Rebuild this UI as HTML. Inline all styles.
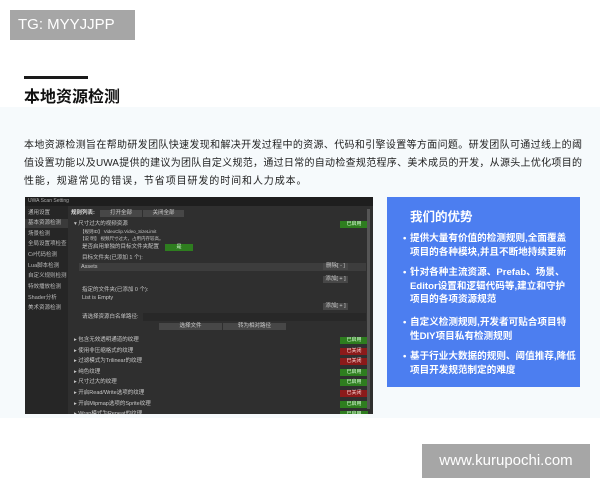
<!DOCTYPE html>
<html><head><meta charset="utf-8"><style>
*{margin:0;padding:0;box-sizing:border-box}
body{width:600px;height:480px;background:#fff;position:relative;overflow:hidden;font-family:"Liberation Sans","Noto Sans CJK SC",sans-serif}
.a{position:absolute;white-space:nowrap}
.tg{left:10px;top:10px;width:125px;height:30px;background:#a6a6a6;color:#fff;font-size:15px;line-height:30px;padding-left:8px}
.wm{left:422px;top:444px;width:168px;height:34px;background:#a6a6a6;color:#fff;font-size:15px;line-height:34px;text-align:center}
.band{left:0;top:107px;width:600px;height:311px;background:#f6fafc}
.pl{left:24px;width:558px;font-size:10px;line-height:18px;color:#222;white-space:nowrap;overflow:hidden;text-align:justify;text-align-last:justify}
.panel{left:25px;top:197px;width:348px;height:217px;background:#2f2f2f;overflow:hidden}
.tb{left:0;top:0;width:348px;height:9px;background:#1e1e1e;font-size:5px;color:#aaa;line-height:9px;padding-left:3px}
.sb{left:0;top:9px;width:43px;height:208px;background:#262626}
.s{font-size:5.5px;color:#bbb;left:3px;line-height:7px}
.t{font-size:5.5px;color:#c8c8c8;line-height:7px}
.g{background:#2e7d1f;color:#dfd;font-size:5px;text-align:center;width:28px;height:7px;line-height:7px}
.r{background:#8b1a1a;color:#fdd;font-size:5px;text-align:center;width:28px;height:7px;line-height:7px}
.btn{background:#474747;color:#ccc;font-size:5.5px;text-align:center;height:7px;line-height:7px}
.blue{left:387px;top:197px;width:193px;height:190px;background:#4c7ef0;color:#fff}
.bl{font-size:9.6px;font-weight:bold;line-height:13.5px;left:23px;white-space:nowrap}
.dot{position:absolute;left:-7px}
</style></head><body>
<div class="a tg">TG: MYYJJPP</div>
<div class="a" style="left:24px;top:76px;width:64px;height:3px;background:#1a1a1a"></div>
<div class="a" style="left:24px;top:83px;font-size:16px;font-weight:bold;color:#111">本地资源检测</div>
<div class="a band"></div>
<div class="a pl" style="top:137px">本地资源检测旨在帮助研发团队快速发现和解决开发过程中的资源、代码和引擎设置等方面问题。研发团队可通过线上的阈</div>
<div class="a pl" style="top:155px">值设置功能以及UWA提供的建议为团队自定义规范，通过日常的自动检查规范程序、美术成员的开发，从源头上优化项目的</div>
<div class="a" style="left:24px;top:173px;font-size:10px;line-height:18px;color:#222;letter-spacing:0.9px">性能，规避常见的错误，节省项目研发的时间和人力成本。</div>
<div class="a panel">
<div class="a tb">UWA Scan Setting</div>
<div class="a sb"></div>
<div class="a s" style="top:13px">通用设置</div>
<div class="a" style="left:0;top:22px;width:43px;height:9px;background:#3a3a3a"></div>
<div class="a s" style="top:23px">基本资源检测</div>
<div class="a s" style="top:34px">场景检测</div>
<div class="a s" style="top:44px">全局设置项检查</div>
<div class="a s" style="top:55px">C#代码检测</div>
<div class="a s" style="top:66px">Lua脚本检测</div>
<div class="a s" style="top:76px">自定义规则检测</div>
<div class="a s" style="top:87px">特效播放检测</div>
<div class="a s" style="top:98px">Shader分析</div>
<div class="a s" style="top:108px">美术资源检测</div>
<div class="a t" style="left:46px;top:13px;font-weight:bold;color:#ddd">规则列表:</div>
<div class="a btn" style="left:75px;top:13px;width:42px">打开全部</div>
<div class="a btn" style="left:118px;top:13px;width:41px">关闭全部</div>
<div class="a t" style="left:49px;top:24px">▾ 尺寸过大的视频资源</div>
<div class="a g" style="left:315px;top:24px">已启用</div>
<div class="a t" style="left:55px;top:31px;font-size:4.5px">【规则ID】 VideoClip.Video_SizeLimit</div>
<div class="a t" style="left:55px;top:38px;font-size:4.5px">【说 明】 视频尺寸过大，占用内存较高。</div>
<div class="a t" style="left:57px;top:47px">是否启用单独的目标文件夹配置</div>
<div class="a g" style="left:140px;top:47px">是</div>
<div class="a t" style="left:57px;top:58px">目标文件夹(已添加 1 个):</div>
<div class="a" style="left:54px;top:66px;width:287px;height:8px;background:#3d3d3d"></div>
<div class="a t" style="left:56px;top:67px">Assets</div>
<div class="a btn" style="left:298px;top:66px;width:25px">删除[ - ]</div>
<div class="a btn" style="left:298px;top:79px;width:25px">添加[ + ]</div>
<div class="a t" style="left:57px;top:90px">指定的文件夹(已添加 0 个):</div>
<div class="a t" style="left:57px;top:98px">List is Empty</div>
<div class="a btn" style="left:298px;top:106px;width:25px">添加[ + ]</div>
<div class="a t" style="left:57px;top:117px">请选择资源白名单路径:</div>
<div class="a" style="left:118px;top:116px;width:223px;height:8px;background:#282828"></div>
<div class="a btn" style="left:134px;top:126px;width:63px">选择文件</div>
<div class="a btn" style="left:198px;top:126px;width:63px">转为相对路径</div>
<div class="a t" style="left:49px;top:140px">▸ 包含无效透明通道的纹理</div><div class="a g" style="left:315px;top:140px">已启用</div>
<div class="a t" style="left:49px;top:151px">▸ 使用非压缩格式的纹理</div><div class="a r" style="left:315px;top:151px">已关闭</div>
<div class="a t" style="left:49px;top:161px">▸ 过滤模式为Trilinear的纹理</div><div class="a r" style="left:315px;top:161px">已关闭</div>
<div class="a t" style="left:49px;top:172px">▸ 纯色纹理</div><div class="a g" style="left:315px;top:172px">已启用</div>
<div class="a t" style="left:49px;top:182px">▸ 尺寸过大的纹理</div><div class="a g" style="left:315px;top:182px">已启用</div>
<div class="a t" style="left:49px;top:193px">▸ 开启Read/Write选项的纹理</div><div class="a r" style="left:315px;top:193px">已关闭</div>
<div class="a t" style="left:49px;top:204px">▸ 开启Mipmap选项的Sprite纹理</div><div class="a g" style="left:315px;top:204px">已启用</div>
<div class="a t" style="left:49px;top:214px">▸ Wrap模式为Repeat的纹理</div><div class="a g" style="left:315px;top:214px">已启用</div>
<div class="a" style="left:342px;top:12px;width:3px;height:200px;background:#555"></div>
</div>
<div class="a blue">
<div class="a" style="left:23px;top:9px;font-size:12.5px;font-weight:bold">我们的优势</div>
<div class="a bl" style="top:35px"><span class="dot">•</span>提供大量有价值的检测规则,全面覆盖<br>项目的各种模块,并且不断地持续更新</div>
<div class="a bl" style="top:69px"><span class="dot">•</span>针对各种主流资源、Prefab、场景、<br>Editor设置和逻辑代码等,建立和守护<br>项目的各项资源规范</div>
<div class="a bl" style="top:119px"><span class="dot">•</span>自定义检测规则,开发者可贴合项目特<br>性DIY项目私有检测规则</div>
<div class="a bl" style="top:153px"><span class="dot">•</span>基于行业大数据的规则、阈值推荐,降低<br>项目开发规范制定的难度</div>
</div>
<div class="a wm">www.kurupochi.com</div>
</body></html>
